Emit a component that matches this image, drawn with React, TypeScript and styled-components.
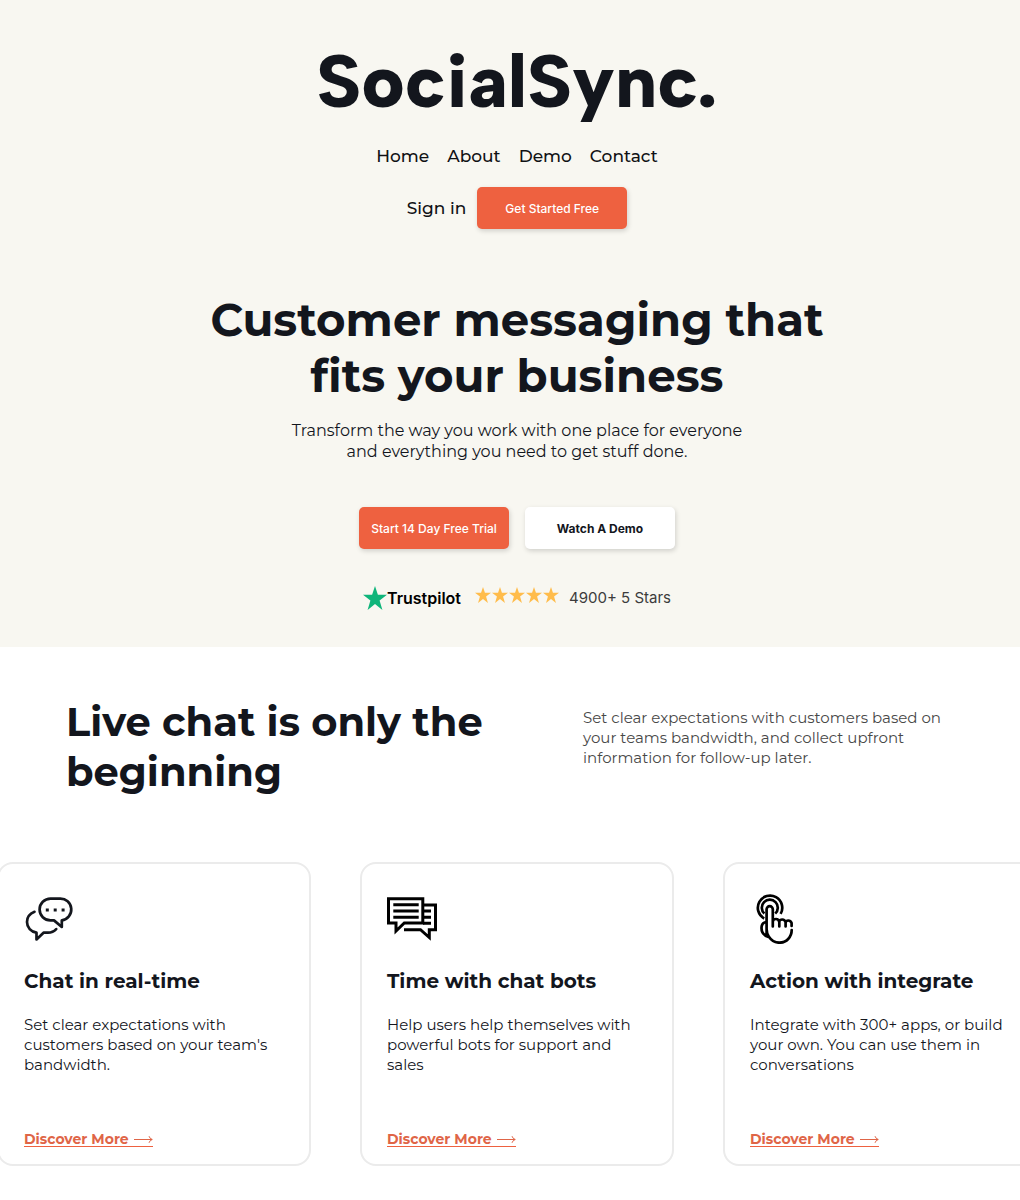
import React from "react";
import styled, { createGlobalStyle } from "styled-components";

const ink = "#13161d";
const orange = "#ee6140";

const GlobalStyle = createGlobalStyle`
  *, *::before, *::after { box-sizing: border-box; }
  body {
    margin: 0;
    background: #fff;
    color: ${ink};
    font-family: Montserrat, Inter, "Liberation Sans", sans-serif;
    overflow-x: hidden;
  }
  h1, h2, h3, p { margin: 0; }
`;

const Hero = styled.header`
  display: flex;
  flex-direction: column;
  align-items: center;
  padding: 36px 0 36px 14px;
  background: #f8f7f1;
`;

const Logo = styled.a`
  color: ${ink};
  font-family: "Albert Sans", Figtree, Inter, "Liberation Sans", sans-serif;
  font-size: 75px;
  font-weight: 800;
  line-height: 90px;
  text-decoration: none;
`;

const Nav = styled.nav`
  display: flex;
  gap: 18px;
  margin-top: 20px;
`;

const NavLink = styled.a`
  color: #101114;
  font-size: 17px;
  line-height: 20px;
  font-weight: 500;
  text-decoration: none;
`;

const Account = styled.div`
  display: flex;
  align-items: center;
  gap: 11px;
  margin-top: 21px;
`;

const Button = styled.button<{ $light?: boolean }>`
  width: 150px;
  height: 42px;
  padding: 0;
  border: 0;
  border-radius: 5px;
  background: ${(p) => (p.$light ? "#fff" : orange)};
  color: ${(p) => (p.$light ? ink : "#fff")};
  box-shadow: 1px 2px 5px rgba(0, 0, 0, 0.16);
  font-family: Inter, "Liberation Sans", sans-serif;
  font-size: 12px;
  font-weight: ${(p) => (p.$light ? 700 : 500)};
  cursor: pointer;
`;

const Headline = styled.h1`
  max-width: 680px;
  margin-top: 63px;
  font-size: 45px;
  line-height: 56px;
  font-weight: 700;
  text-align: center;
`;

const Lead = styled.p`
  max-width: 480px;
  margin-top: 16px;
  font-size: 16px;
  line-height: 21px;
  text-align: center;
`;

const Actions = styled.div`
  display: flex;
  gap: 16px;
  margin-top: 45px;
`;

const Rating = styled.div`
  display: flex;
  align-items: center;
  margin-top: 36px;
  font-family: Inter, "Liberation Sans", sans-serif;
  line-height: 26px;
`;

const Brand = styled.span`
  color: #000;
  font-size: 16px;
  font-weight: 600;
`;

const Stars = styled.span`
  display: flex;
  gap: 1px;
  margin: 0 10px 6px 14px;
`;

const Count = styled.span`
  color: #3c3c3c;
  font-size: 15px;
`;

const Intro = styled.section`
  display: grid;
  grid-template-columns: 517px 1fr;
  padding: 50px 50px 0 66px;
`;

const IntroTitle = styled.h2`
  max-width: 440px;
  font-size: 40px;
  line-height: 50px;
  font-weight: 700;
`;

const IntroText = styled.p`
  margin-top: 11px;
  color: #484848;
  font-size: 15px;
  line-height: 20px;
`;

const Cards = styled.section`
  display: flex;
  justify-content: center;
  gap: 49px;
  padding: 65px 0 34px 14px;
  overflow: hidden;
`;

const Card = styled.article`
  flex: 0 0 314px;
  display: flex;
  flex-direction: column;
  align-items: flex-start;
  padding: 30px 25px 17px;
  border: 2px solid #ebebeb;
  border-radius: 16px;
`;

const CardTitle = styled.h3`
  margin-top: 25px;
  font-size: 20px;
  line-height: 24px;
  font-weight: 700;
`;

const CardText = styled.p`
  min-height: 60px;
  margin-top: 22px;
  font-size: 15px;
  line-height: 20px;
`;

const More = styled.a`
  display: inline-flex;
  align-items: center;
  gap: 5px;
  margin-top: 57px;
  border-bottom: 1px solid ${orange};
  color: #df6547;
  font-size: 14px;
  line-height: 14px;
  font-weight: 700;
  text-decoration: none;
`;

const Star = ({ size, color }: { size: number; color: string }) => (
  <svg width={size} height={size} viewBox="0 0 24 24" fill={color} aria-hidden="true">
    <path d="M12 0l2.9 8.8H24l-7.4 5.6L19.4 24 12 18.1 4.6 24l2.8-9.6L0 8.8h9.1z" />
  </svg>
);

const Arrow = () => (
  <svg width="19" height="9" viewBox="0 0 19 9" fill="none" stroke="#df6547" aria-hidden="true">
    <path d="M0 4.5h18M15 1.2q.8 2.6 3.3 3.3Q15.8 5.2 15 7.8" />
  </svg>
);

const IconFrame = ({ children, color = "#000" }: { children: React.ReactNode; color?: string }) => (
  <svg width="50" height="50" viewBox="0 0 50 50" fill="none" stroke={color} strokeWidth="2.7" aria-hidden="true">
    {children}
  </svg>
);

const BubblesIcon = () => (
  <IconFrame color={ink}>
    <g strokeLinecap="round" strokeLinejoin="round">
      <path d="M26.5 4.6H36a10.9 10.9 0 0 1 1.8 21.7V33L30 26.4H26.5a10.9 10.9 0 0 1 0-21.8Z" />
      <path d="M10.5 17.8C6 19.6 3 23.5 3 28c0 5.600 4 9.900 9.500 10.700V45.500l7-6.800H24c3.500 0 6-1.200 8.200-3.600" />
    </g>
    <path d="M21.8 16h3M29.700 16h3M37.600 16h3" strokeWidth="3" />
  </IconFrame>
);

const BotsIcon = () => (
  <IconFrame>
    <path d="M1.5 4.7H35.8V29H17.3L9 37V29H1.5Z" strokeWidth="3" />
    <path d="M6.3 10.7H31.7M6.3 17H31.7M6.3 23.3H31.7M36 17h8M36 23.3h8M36 29.3h8" strokeWidth="3" />
    <path d="M37 11H48.5V35.700H42.300V43.500L33.500 35.700H17" strokeWidth="3" />
  </IconFrame>
);

const TouchIcon = () => (
  <IconFrame>
    <path d="M14.2 24.5a12.2 12.2 0 1 1 16.4-4.6" />
    <path d="M14.4 19.6a8 8 0 1 1 10.8 0" />
    <path
      d="M16.6 41V15.3a3.1 3.1 0 0 1 6.2 0V32.5M22.8 27.5q.5-2.5 3.2-2.5t3.3 3v4.5M29.3 27.5q.5-2 3-2t3.3 2.700v4.300M35.600 28.500q.5-2 2.700-2t3.300 2.500v3M41.700 36c0 7-5.200 12.700-12.300 12.700-5 0-8.500-2.700-10.700-6.300-1.500-2.300-2.100-4.400-2.100-7.400M16 28c-3 .6-4.500 2.600-4.500 6 0 4 2.500 7.500 7 9"
      strokeLinecap="round"
      strokeLinejoin="round"
    />
  </IconFrame>
);

const features = [
  {
    title: "Chat in real-time",
    text: "Set clear expectations with customers based on your team's bandwidth.",
    Icon: BubblesIcon,
  },
  {
    title: "Time with chat bots",
    text: "Help users help themselves with powerful bots for support and sales",
    Icon: BotsIcon,
  },
  {
    title: "Action with integrate",
    text: "Integrate with 300+ apps, or build your own. You can use them in conversations",
    Icon: TouchIcon,
  },
];

export default function App() {
  return (
    <>
      <GlobalStyle />
      <Hero>
        <Logo href="#">SocialSync.</Logo>
        <Nav>
          {["Home", "About", "Demo", "Contact"].map((label) => (
            <NavLink href="#" key={label}>{label}</NavLink>
          ))}
        </Nav>
        <Account>
          <NavLink href="#">Sign in</NavLink>
          <Button type="button">Get Started Free</Button>
        </Account>
        <Headline>Customer messaging that fits your business</Headline>
        <Lead>Transform the way you work with one place for everyone and everything you need to get stuff done.</Lead>
        <Actions>
          <Button type="button">Start 14 Day Free Trial</Button>
          <Button type="button" $light>Watch A Demo</Button>
        </Actions>
        <Rating>
          <Star size={24} color="#0fb57a" />
          <Brand>Trustpilot</Brand>
          <Stars>
            {[1, 2, 3, 4, 5].map((n) => (
              <Star key={n} size={16} color="#ffbc4b" />
            ))}
          </Stars>
          <Count>4900+ 5 Stars</Count>
        </Rating>
      </Hero>
      <main>
        <Intro>
          <IntroTitle>Live chat is only the beginning</IntroTitle>
          <IntroText>
            Set clear expectations with customers based on your teams bandwidth, and collect upfront information for follow-up later.
          </IntroText>
        </Intro>
        <Cards>
          {features.map(({ title, text, Icon }) => (
            <Card key={title}>
              <Icon />
              <CardTitle>{title}</CardTitle>
              <CardText>{text}</CardText>
              <More href="#">Discover More <Arrow /></More>
            </Card>
          ))}
        </Cards>
      </main>
    </>
  );
}
